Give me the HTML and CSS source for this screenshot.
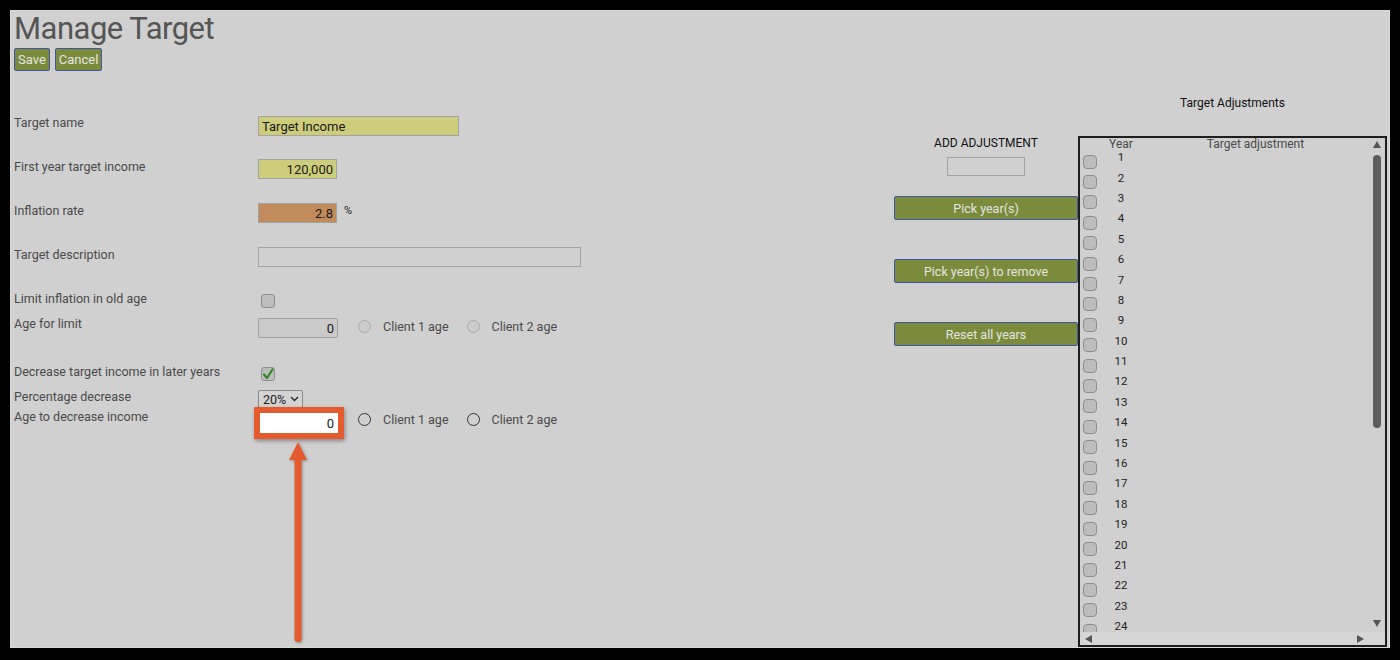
FILE: index.html
```html
<!DOCTYPE html>
<html lang="en">
<head>
  <meta charset="UTF-8">
  <title>Manage Target</title>
  <link rel="stylesheet" href="styles.css">
</head>
<body>
  <div class="page">
    <div class="page-head">
      <h1>Manage Target</h1>
      <div class="actions">
        <button class="btn">Save</button>
        <button class="btn">Cancel</button>
      </div>
    </div>

    <div class="main">
      <form class="target-form">
        <div class="row">
          <label>Target name</label>
          <input class="field field-name yellow" type="text" value="Target Income">
        </div>
        <div class="row">
          <label>First year target income</label>
          <input class="field field-num yellow" type="text" value="120,000">
        </div>
        <div class="row">
          <label>Inflation rate</label>
          <input class="field field-num brown" type="text" value="2.8">
          <span class="unit">%</span>
        </div>
        <div class="row">
          <label>Target description</label>
          <input class="field field-desc" type="text" value="">
        </div>
        <div class="row row-tight">
          <label>Limit inflation in old age</label>
          <span class="check check-row"></span>
        </div>
        <div class="row row-gap">
          <label>Age for limit</label>
          <input class="field field-age" type="text" value="0">
          <div class="choices">
            <span class="radio disabled"></span><span class="choice-text">Client 1 age</span>
            <span class="radio disabled second"></span><span class="choice-text">Client 2 age</span>
          </div>
        </div>
        <div class="row row-tight">
          <label>Decrease target income in later years</label>
          <span class="check check-row">
            <svg width="14" height="14" viewBox="0 0 14 14"><path d="M3 7.5 L6 11 L11.5 2.5" fill="none" stroke="#2b8a1e" stroke-width="2.2" stroke-linecap="round" stroke-linejoin="round"/></svg>
          </span>
        </div>
        <div class="row row-short">
          <label>Percentage decrease</label>
          <span class="select">20%
            <svg width="9" height="6" viewBox="0 0 9 6"><path d="M1 1 L4.5 4.5 L8 1" fill="none" stroke="#222" stroke-width="1.3"/></svg>
          </span>
        </div>
        <div class="row">
          <label>Age to decrease income</label>
          <span class="flagged"><input class="field field-flag" type="text" value="0"></span>
          <div class="choices near">
            <span class="radio"></span><span class="choice-text">Client 1 age</span>
            <span class="radio second"></span><span class="choice-text">Client 2 age</span>
          </div>
        </div>
      </form>

      <div class="adjust-col">
        <div class="adjust-title">ADD ADJUSTMENT</div>
        <input class="field field-adjust" type="text" value="">
        <button class="btn wide">Pick year(s)</button>
        <button class="btn wide">Pick year(s) to remove</button>
        <button class="btn wide">Reset all years</button>
      </div>

      <div class="table-col">
        <div class="table-title">Target Adjustments</div>
        <div class="adj-table">
          <div class="adj-body">
            <div class="adj-head"><span class="col-check"></span><span class="col-year">Year</span><span class="col-adj">Target adjustment</span></div>
            <div class="adj-rows">
              <div class="adj-row"><span class="check"></span><span class="num">1</span></div>
              <div class="adj-row"><span class="check"></span><span class="num">2</span></div>
              <div class="adj-row"><span class="check"></span><span class="num">3</span></div>
              <div class="adj-row"><span class="check"></span><span class="num">4</span></div>
              <div class="adj-row"><span class="check"></span><span class="num">5</span></div>
              <div class="adj-row"><span class="check"></span><span class="num">6</span></div>
              <div class="adj-row"><span class="check"></span><span class="num">7</span></div>
              <div class="adj-row"><span class="check"></span><span class="num">8</span></div>
              <div class="adj-row"><span class="check"></span><span class="num">9</span></div>
              <div class="adj-row"><span class="check"></span><span class="num">10</span></div>
              <div class="adj-row"><span class="check"></span><span class="num">11</span></div>
              <div class="adj-row"><span class="check"></span><span class="num">12</span></div>
              <div class="adj-row"><span class="check"></span><span class="num">13</span></div>
              <div class="adj-row"><span class="check"></span><span class="num">14</span></div>
              <div class="adj-row"><span class="check"></span><span class="num">15</span></div>
              <div class="adj-row"><span class="check"></span><span class="num">16</span></div>
              <div class="adj-row"><span class="check"></span><span class="num">17</span></div>
              <div class="adj-row"><span class="check"></span><span class="num">18</span></div>
              <div class="adj-row"><span class="check"></span><span class="num">19</span></div>
              <div class="adj-row"><span class="check"></span><span class="num">20</span></div>
              <div class="adj-row"><span class="check"></span><span class="num">21</span></div>
              <div class="adj-row"><span class="check"></span><span class="num">22</span></div>
              <div class="adj-row"><span class="check"></span><span class="num">23</span></div>
              <div class="adj-row"><span class="check"></span><span class="num">24</span></div>
            </div>
          </div>
          <div class="vscroll">
            <span class="arr-up"></span>
            <span class="thumb"></span>
            <span class="arr-down"></span>
          </div>
          <div class="hscroll">
            <span class="arr-left"></span>
            <span class="arr-right"></span>
          </div>
          <div class="corner"></div>
        </div>
      </div>
    </div>

    <!-- annotation arrow pointing at the highlighted field -->
    <svg class="arrow" width="22" height="206" viewBox="0 0 22 206">
      <rect x="7.5" y="16" width="7" height="186" rx="3" fill="#e35b2e"/>
      <polygon points="11,2 2,20 20,20" fill="#e35b2e"/>
    </svg>
  </div>
</body>
</html>
```

FILE: styles.css
```css
html, body {
  margin: 0;
  background: #000;
  overflow: hidden;
}

body {
  font-family: Roboto, 'Liberation Sans', Arial, sans-serif;
  color: #4a4a4a;
}

.page {
  position: relative;
  margin: 10px;
  width: 1380px;
  height: 638px;
  background: #d0d0d0;
  box-shadow: inset 0 0 0 1px #dadada;
  box-sizing: border-box;
  padding: 0 3px 0 4px;
}

.page-head h1 {
  margin: 0;
  font-size: 31px;
  font-weight: 400;
  letter-spacing: -0.5px;
  line-height: 37px;
  color: #555;
}

.actions {
  display: flex;
  gap: 5px;
  margin-top: 1px;
}

.btn {
  height: 23px;
  padding: 0 3px;
  background: #7a8c3b;
  border: 1px solid #3d56a6;
  border-radius: 2px;
  color: #e4e4e4;
  font-family: inherit;
  font-size: 13px;
}

.main {
  display: flex;
  align-items: flex-start;
}

/* left form */

.target-form {
  width: 880px;
  padding-top: 44px;
  margin: 0;
}

.row {
  display: flex;
  align-items: flex-start;
  height: 44px;
}

.row-tight {
  height: 25px;
}

.row-gap {
  height: 48px;
}

.row-short {
  height: 20px;
}

.row label {
  width: 244px;
  flex: none;
  font-size: 12.5px;
  line-height: 16px;
  color: #4a4a4a;
}

.field {
  height: 20px;
  box-sizing: border-box;
  border: 1px solid #a2a2a2;
  background: #d0d0d0;
  font-family: inherit;
  font-size: 13px;
  color: #1a1a1a;
  padding: 0 3px;
  margin: 0;
  outline: none;
}

.field-name {
  width: 201px;
  margin-top: 1px;
}

.field-num {
  width: 79px;
  text-align: right;
}

.field-desc {
  width: 323px;
}

.field-age {
  width: 80px;
  margin-top: 2px;
  text-align: right;
  background: #cacaca;
  border-radius: 2px;
}

.yellow {
  background: #cdcd7c;
}

.brown {
  background: #c18b5c;
}

.unit {
  margin-left: 7px;
  font-size: 11px;
  line-height: 16px;
  color: #222;
}

.check {
  display: inline-block;
  width: 14px;
  height: 14px;
  box-sizing: border-box;
  border: 1px solid #8e8e8e;
  border-radius: 3px;
  background: #bdbdbd;
  flex: none;
}

.check svg {
  display: block;
  margin: -1px;
}

.check-row {
  margin: 3px 0 0 3px;
}

.choices {
  display: flex;
  align-items: center;
  margin: 2px 0 0 20px;
  height: 16px;
}

.choices.near {
  margin-left: 14px;
}

.radio {
  width: 13px;
  height: 13px;
  box-sizing: border-box;
  border: 1.5px solid #333;
  border-radius: 50%;
  flex: none;
}

.radio.disabled {
  border: 1px solid #a8a8a8;
  background: #cbcbcb;
}

.radio.second {
  margin-left: 18px;
}

.choice-text {
  margin-left: 12px;
  font-size: 12.5px;
  color: #4a4a4a;
}

.select {
  display: flex;
  align-items: center;
  gap: 4px;
  width: 45px;
  height: 18px;
  box-sizing: border-box;
  margin-top: 1px;
  padding-left: 4px;
  border: 1px solid #8a8a8a;
  border-radius: 2px;
  background: #d4d4d4;
  font-size: 12.5px;
  color: #222;
}

.flagged {
  display: inline-block;
  margin: -2px 0 0 -4px;
  border: 6px solid #e35b2e;
  box-shadow: 1px 2px 4px rgba(0, 0, 0, 0.35);
}

.field-flag {
  display: block;
  width: 78px;
  background: #fff;
  border: none;
  text-align: right;
  padding-right: 4px;
}

/* middle column */

.adjust-col {
  width: 184px;
  display: flex;
  flex-direction: column;
  align-items: center;
  padding-top: 64px;
}

.adjust-title {
  font-size: 12px;
  line-height: 16px;
  color: #111;
}

.field-adjust {
  width: 78px;
  height: 19px;
  margin-top: 6px;
}

.btn.wide {
  width: 184px;
  height: 24px;
  font-size: 12.5px;
  margin-top: 39px;
}

.field-adjust + .btn.wide {
  margin-top: 20px;
}

/* adjustments table */

.table-col {
  width: 309px;
  padding-top: 24px;
}

.table-title {
  text-align: center;
  font-size: 12px;
  line-height: 16px;
  color: #111;
}

.adj-table {
  margin-top: 25px;
  height: 511px;
  box-sizing: border-box;
  border: 2px solid #1e1e1e;
  display: grid;
  grid-template-columns: 1fr 16px;
  grid-template-rows: 1fr 13px;
}

.adj-body {
  overflow: hidden;
}

.adj-head {
  display: flex;
  height: 13px;
  line-height: 13px;
  font-size: 12px;
  color: #4a4a4a;
}

.col-check {
  width: 20px;
}

.col-year,
.num {
  width: 42px;
  text-align: center;
}

.col-adj {
  flex: 1;
  text-align: center;
}

.adj-row {
  display: flex;
  align-items: center;
  height: 20.4px;
}

.adj-row .check {
  margin: 1px 0 0 3px;
  border-radius: 4px;
}

.num {
  margin-left: 3px;
  padding-bottom: 7px;
  font-size: 11.5px;
  line-height: 11px;
  color: #222;
}

.vscroll {
  display: flex;
  flex-direction: column;
  align-items: center;
}

.arr-up {
  margin-top: 3px;
  border: 4.5px solid transparent;
  border-top: none;
  border-bottom: 7px solid #555;
}

.thumb {
  margin-top: 7px;
  width: 8px;
  height: 273px;
  border-radius: 4px;
  background: #5c5c5c;
}

.arr-down {
  margin-top: auto;
  margin-bottom: 5px;
  border: 4.5px solid transparent;
  border-bottom: none;
  border-top: 7px solid #555;
}

.hscroll {
  display: flex;
  align-items: center;
  justify-content: space-between;
  padding: 0 5px;
  background: #d6d6d6;
}

.arr-left {
  border: 4.5px solid transparent;
  border-left: none;
  border-right: 7px solid #555;
}

.arr-right {
  border: 4.5px solid transparent;
  border-right: none;
  border-left: 7px solid #555;
}

.corner {
  background: #d6d6d6;
}

.arrow {
  position: absolute;
  left: 277px;
  top: 430px;
  filter: drop-shadow(1px 1px 1.5px rgba(0, 0, 0, 0.3));
}
```
